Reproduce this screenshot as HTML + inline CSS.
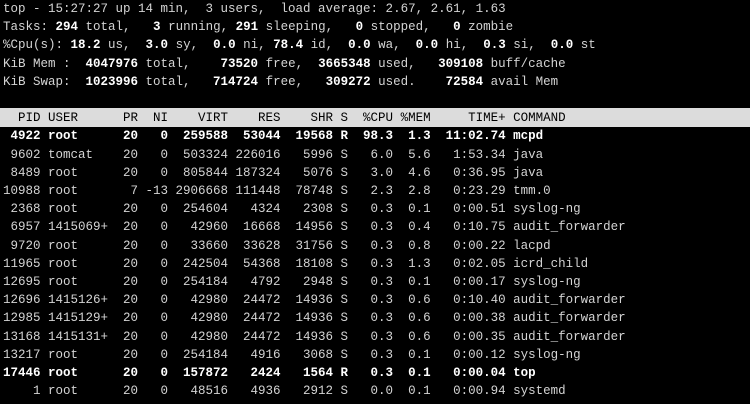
<!DOCTYPE html>
<html><head><meta charset="utf-8">
<style>
html,body{margin:0;padding:0;background:#000;width:750px;height:404px;overflow:hidden}
pre{position:absolute;left:3px;top:0px;margin:0;font-family:"Liberation Mono","DejaVu Sans Mono",monospace;font-size:12.5px;line-height:18.2px;color:#d4d4d4;white-space:pre}
b{color:#fff;font-weight:bold}
.hd{position:absolute;left:0;top:108px;width:750px;height:19px;background:#dcdcdc}
.hdt{color:#000;}
</style></head><body>
<div class="hd"></div>
<pre>top - 15:27:27 up 14 min,  3 users,  load average: 2.67, 2.61, 1.63
Tasks: <b>294</b> total,   <b>3</b> running, <b>291</b> sleeping,   <b>0</b> stopped,   <b>0</b> zombie
%Cpu(s): <b>18.2</b> us,  <b>3.0</b> sy,  <b>0.0</b> ni, <b>78.4</b> id,  <b>0.0</b> wa,  <b>0.0</b> hi,  <b>0.3</b> si,  <b>0.0</b> st
KiB Mem :  <b>4047976</b> total,    <b>73520</b> free,  <b>3665348</b> used,   <b>309108</b> buff/cache
KiB Swap:  <b>1023996</b> total,   <b>714724</b> free,   <b>309272</b> used.    <b>72584</b> avail Mem

<span class="hdt">  PID USER      PR  NI    VIRT    RES    SHR S  %CPU %MEM     TIME+ COMMAND</span>
<b> 4922 root      20   0  259588  53044  19568 R  98.3  1.3  11:02.74 mcpd</b>
 9602 tomcat    20   0  503324 226016   5996 S   6.0  5.6   1:53.34 java
 8489 root      20   0  805844 187324   5076 S   3.0  4.6   0:36.95 java
10988 root       7 -13 2906668 111448  78748 S   2.3  2.8   0:23.29 tmm.0
 2368 root      20   0  254604   4324   2308 S   0.3  0.1   0:00.51 syslog-ng
 6957 1415069+  20   0   42960  16668  14956 S   0.3  0.4   0:10.75 audit_forwarder
 9720 root      20   0   33660  33628  31756 S   0.3  0.8   0:00.22 lacpd
11965 root      20   0  242504  54368  18108 S   0.3  1.3   0:02.05 icrd_child
12695 root      20   0  254184   4792   2948 S   0.3  0.1   0:00.17 syslog-ng
12696 1415126+  20   0   42980  24472  14936 S   0.3  0.6   0:10.40 audit_forwarder
12985 1415129+  20   0   42980  24472  14936 S   0.3  0.6   0:00.38 audit_forwarder
13168 1415131+  20   0   42980  24472  14936 S   0.3  0.6   0:00.35 audit_forwarder
13217 root      20   0  254184   4916   3068 S   0.3  0.1   0:00.12 syslog-ng
<b>17446 root      20   0  157872   2424   1564 R   0.3  0.1   0:00.04 top</b>
    1 root      20   0   48516   4936   2912 S   0.0  0.1   0:00.94 systemd</pre>
</body></html>
